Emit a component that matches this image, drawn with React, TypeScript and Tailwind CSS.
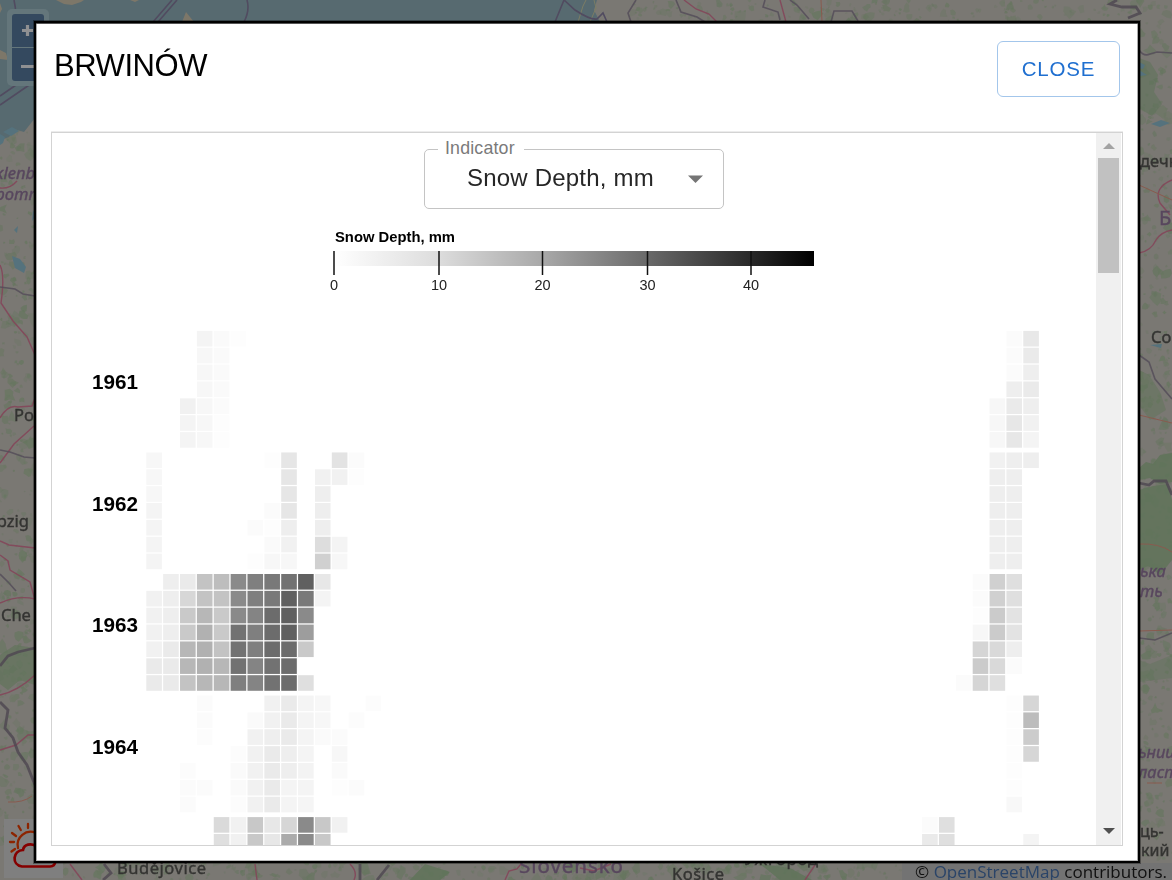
import React from "react";

type Cell = [number, string];

const parse = (row: string): Cell[] =>
  row
    .split(" ")
    .filter(Boolean)
    .map((item) => {
      const [col, level] = item.split(":");
      return [Number(col), `#${level}${level}${level}`];
    });

// One entry per year, one string per weekday; every item is "week:grey level".
const YEARS: { year: string; rows: string[] }[] = [
  {
    year: "1961",
    rows: [
      "3:f4 4:fa 5:fd 51:fb 52:e8",
      "3:f7 4:fa 51:fb 52:ea",
      "3:f7 4:fa 51:fb 52:ee",
      "3:f7 4:fa 51:ee 52:ea",
      "2:f1 3:f7 4:fb 50:f7 51:ea 52:ee",
      "2:f4 3:f7 4:fd 50:f7 51:e7 52:f1",
      "2:f4 3:f7 4:fd 50:f7 51:e7 52:f4",
    ],
  },
  {
    year: "1962",
    rows: [
      "0:f7 7:fd 8:e6 11:e3 12:fb 50:f1 51:ee 52:ee",
      "0:f7 8:e6 10:f1 11:f1 12:fd 50:ee 51:ee",
      "0:f7 8:e6 10:ee 50:ee 51:ee",
      "0:f4 7:fb 8:e6 10:ee 50:ee 51:ee",
      "0:f4 6:fb 7:fd 8:ee 10:ee 50:ee 51:ee",
      "0:f4 7:fa 8:f1 10:dd 11:f4 50:ee 51:ee",
      "0:f4 6:fd 7:f7 8:f7 10:d0 11:f7 50:ee 51:ee",
    ],
  },
  {
    year: "1963",
    rows: [
      "1:ee 2:ea 3:c3 4:bd 5:8a 6:7f 7:79 8:72 9:60 10:e7 49:fb 50:d0 51:df",
      "0:f1 1:ee 2:d7 3:c3 4:c3 5:8a 6:7f 7:79 8:60 9:79 10:f4 49:fb 50:d0 51:df",
      "0:f1 1:ee 2:c9 3:b7 4:c9 5:8a 6:84 7:6c 8:60 9:8a 49:fd 50:cb 51:e3",
      "0:f1 1:ee 2:c9 3:b1 4:c9 5:72 6:7f 7:6c 8:60 9:9d 49:f7 50:cb 51:e3",
      "0:f1 1:ea 2:b7 3:b1 4:c3 5:72 6:7f 7:6c 8:6c 9:c9 49:d5 50:d9 51:ee",
      "0:ea 1:ea 2:b7 3:b1 4:b7 5:72 6:84 7:72 8:6c 49:cb 50:d9 51:fb",
      "0:ea 1:ea 2:c3 3:b7 4:b7 5:7f 6:84 7:72 8:6c 9:df 48:fb 49:d5 50:df",
    ],
  },
  {
    year: "1964",
    rows: [
      "3:fb 7:f1 8:ea 9:f4 10:f7 13:fc 51:fd 52:d6",
      "3:fb 6:fa 7:f1 8:ea 9:f4 10:f7 12:fc 51:fd 52:bc",
      "3:fc 6:f1 7:ee 8:ea 9:f4 10:fa 11:fb 51:fd 52:cc",
      "5:fc 6:f1 7:ea 8:ee 9:f4 11:f7 51:fd 52:d6",
      "2:fc 5:fa 6:f1 7:ea 8:ee 9:f3 11:fa 51:fd",
      "2:fb 3:fb 5:fa 6:f1 7:ea 8:f4 9:f4 11:fd 12:fb 51:fd",
      "2:fb 5:fc 6:f1 7:ea 8:f4 9:f5 51:f8",
    ],
  },
  {
    year: "1965",
    rows: [
      "4:da 5:f1 6:c8 7:e7 8:d6 9:8a 10:c8 11:f1 46:fb 47:df",
      "4:df 5:f1 6:c8 7:e7 8:ab 9:8a 10:c8 46:ea 47:df 52:f4",
    ],
  },
];

const TICKS = [
  { x: 334, label: "0" },
  { x: 439, label: "10" },
  { x: 542.5, label: "20" },
  { x: 647.5, label: "30" },
  { x: 751, label: "40" },
];

const PITCH = 16.865;

function makeWoods() {
  let s = 7;
  const rnd = () => {
    s = (s * 16807) % 2147483647;
    return s / 2147483647;
  };
  const strips = [
    { x: 0, y: 128, w: 35, h: 740, n: 330 },
    { x: 1139, y: 0, w: 33, h: 864, n: 390 },
    { x: 630, y: 0, w: 510, h: 22, n: 170 },
    { x: 60, y: 862, w: 842, h: 18, n: 270 },
  ];
  const out: { d: string; o: number }[] = [];
  strips.forEach((st) => {
    for (let i = 0; i < st.n; i++) {
      const cx = st.x + rnd() * st.w;
      const cy = st.y + rnd() * st.h;
      const r = 1 + rnd() * rnd() * 6;
      const pts: string[] = [];
      for (let k = 0; k < 8; k++) {
        const a = (k / 8) * Math.PI * 2;
        const q = r * (0.5 + rnd() * 0.9);
        pts.push(`${(cx + Math.cos(a) * q).toFixed(1)} ${(cy + Math.sin(a) * q).toFixed(1)}`);
      }
      out.push({ d: `M${pts.join("L")}Z`, o: 0.25 + rnd() * 0.5 });
    }
  });
  return out;
}

const WOODS = makeWoods();

function MapBackground() {
  return (
    <svg className="absolute inset-0" width="1172" height="880" viewBox="0 0 1172 880">
      <rect width="1172" height="880" fill="#7a7873" />
      {WOODS.map((w, i) => (
        <path key={i} d={w.d} fill="#66765f" opacity={w.o} />
      ))}
      <g fill="#60745a" opacity="0.85">
        <path d="M1139 468 L1146 462 L1153 464 L1160 455 L1172 453 V482 L1160 484 L1150 478 L1139 480Z" />
        <path d="M1139 490 L1153 486 L1168 484 L1172 500 V560 L1160 575 L1148 566 L1139 570Z" />
        <path d="M1139 58 L1150 62 L1158 75 L1154 92 L1162 104 L1152 116 L1139 108Z" opacity=".7" />
        <path d="M0 655 L15 645 L35 648 V685 L20 680 L8 690 L0 684Z" opacity=".8" />
        <path d="M1139 660 L1150 664 L1172 655 V678 L1139 682Z" opacity=".5" />
        <path d="M1139 370 L1149 375 L1160 392 L1166 410 L1150 420 L1139 405Z" opacity=".6" />
        <path d="M760 864 L790 868 L812 880 H780Z M425 864 L450 872 L440 880 H410Z" />
      </g>
      <path d="M0 0 H597 L594 10 L600 22 H35 V118 L24 132 L14 129 L9 137 L0 140Z" fill="#576a70" />
      <path d="M578 22 L583 6 L586 0 M590 22 L596 8 L594 0" stroke="#7c7d64" fill="none" />
      <path d="M56 0 L64 4 L72 5 L81 2 L84 0Z M130 0 h9 l-4 2Z M182 22 L186 12 L190 17 L194 22Z M0 50 L6 53 L8 60 L0 59Z M0 3 l2 6 l-2 4Z" fill="#7d7769" />
      <path d="M0 105 L35 81 M0 96 L35 72 M172 0 L153 22 M177 0 L158 22 M247 0 Q250 10 244 22 M555 22 L564 0 L575 10 Q590 20 597 19 L603 13 L607 22 M14 0 Q18 18 13 26" fill="none" stroke="#514b60" strokeWidth="1.6" />
      <g fill="#55727d">
        <path d="M3 132 l9 -5 l7 4 l-8 5Z M0 134 l5 3 l-2 6 l-3 2Z M12 256 l8 3 l6 8 l-2 6 l-9 -5Z M33 210 l3 6 l-4 5Z M14 230 l4 -4 l-1 7Z M1139 62 l6 3 l-2 4 l-4 -1Z M1151 124 l10 -4 l9 3 l-10 4Z M1150 345 l12 -1 l-1 4Z M1139 70 l8 5 l-7 1Z" />
      </g>
      <g fill="none" stroke="#84465a" strokeWidth="1.4" opacity="0.9">
        <path d="M0 188 q10 1 17 -7 M0 265 q5 10 1 38 l12 18 14 16 l8 18 M0 418 q8 -14 18 -11 l14 -1 l3 -8 M0 463 l14 -19 l20 -18 M0 555 l8 6 l2 9 l20 12 l5 18 M0 541 l9 4 l26 3 M0 695 q18 -4 35 -20 M0 750 l16 -5 l12 -10 h7 M0 603 q18 -8 35 -4" />
        <path d="M1172 180 q-19 8 -12 23 l10 12 M1139 253 q12 -2 17 -13 q5 -8 16 -10 M684 0 l12 9 l13 5 l8 8 M780 0 l6 22 M255 864 l2 16 M350 864 q8 8 4 16 M70 864 l12 16 M505 880 l4 -9 l8 -2 l4 -5 M815 865 l-10 15 M580 868 l14 3 l17 -7" />
      </g>
      <g fill="none" stroke="#895b4f" strokeWidth="1">
        <path d="M1139 185 l33 15 M1139 415 l33 8 M1139 544 q20 -1 33 8 M1139 631 l33 -1 M1147 783 h15 M8 802 q15 1 24 -6 M821 0 l1 22" />
      </g>
      <g fill="none" stroke="#554d59" strokeWidth="1.6" opacity="0.85">
        <path d="M0 287 l15 2 l8 5 l12 2 M0 450 l10 2 l14 5 l11 1 M0 574 l9 9 l7 8 M1139 50 q5 7 11 4 l7 -2 l15 1 M1139 355 l10 7 l6 17 l17 20 M676 0 l5 12 l16 5 l8 5 M636 0 l-8 13 l3 9 M765 0 l-2 7 l15 5 l2 8 M790 0 l7 5 l12 14 M831 22 l3 -11 l18 0 l6 10 M1139 638 l16 2 l17 -7" />
      </g>
      <g fill="none" stroke="#504952" strokeWidth="2.8" opacity="0.85">
        <path d="M0 666 l8 -10 l10 -4 l17 -4 M0 702 l8 8 l-3 18 l8 10 l5 14 l9 13 l8 20 M1139 483 l10 2 l5 -4 l12 0 l6 14 M1117 0 l-7 4 l12 3 l14 0 l4 6 l-12 5 M104 864 l7 9 l-8 7 M360 864 v16 M377 880 l12 -15" />
      </g>
      <g strokeWidth="0.4" className="font-['Noto_Sans',sans-serif]">
        <g fill="#58475e" stroke="#58475e" className="text-[16.5px] italic">
          <text x="35" y="179" textAnchor="end">klenb</text>
          <text x="38" y="200" textAnchor="end">pomn</text>
          <text x="1140" y="577">ька</text>
          <text x="1140" y="597">ть</text>
          <text x="1138" y="758">ьниц</text>
          <text x="1138" y="778">ласт</text>
        </g>
        <g fill="#343432" stroke="#343432" className="text-[16.5px]">
          <text x="14" y="421">Po</text>
          <text x="29" y="527" textAnchor="end">pzig</text>
          <text x="1" y="621">Che</text>
          <text x="1140" y="167">дечн</text>
          <text x="1151" y="343">Со</text>
          <text x="1140" y="837" className="text-[16px]">ць-</text>
          <text x="1141" y="856" className="text-[16px]">кий</text>
          <text x="117" y="874" textLength="89">Budějovice</text>
          <text x="672" y="880" textLength="52">Košice</text>
          <text x="744" y="865" textLength="74">Ужгород</text>
        </g>
        <text x="1159" y="225" fill="#58475e" stroke="#58475e" className="text-[20px]">Б</text>
        <text x="519" y="873" textLength="104" fill="#58475e" stroke="#58475e" className="text-[20.5px]">Slovensko</text>
      </g>
    </svg>
  );
}

function ZoomControl() {
  return (
    <div className="absolute left-[7px] top-[9px] flex h-[77px] w-[42px] flex-col gap-px rounded-[5px] bg-[#64767b] p-[5px]">
      <div className="flex h-[33px] items-center rounded-t-[3px] bg-[#34495f] pl-[9px]">
        <svg width="13" height="13" viewBox="0 0 13 13"><path d="M6.5 1v11M1 6.5h11" stroke="#8f9092" strokeWidth="3.2" /></svg>
      </div>
      <div className="flex h-[33px] items-center rounded-b-[3px] bg-[#34495f] pl-[9px] pt-1">
        <svg width="13" height="13" viewBox="0 0 13 13"><path d="M0 6.5h13" stroke="#8f9092" strokeWidth="3" /></svg>
      </div>
    </div>
  );
}

function WeatherButton() {
  return (
    <div className="absolute left-1 top-[819px] h-[59px] w-[59px] bg-[#7f7f7f]">
      <svg width="59" height="59" viewBox="0 0 59 59" fill="none" strokeWidth="2.3" strokeLinecap="round">
        <path d="M14 29 A13 13 0 0 1 32 14 M24 5v4M14.5 7l2.3 4M8 14l4 3M6 23h4M7.5 32.500l3.500 -2.500" stroke="#8c2400" />
        <path d="M18 47.500 C7 46 9 31 19 31 C20 25 27 24 32 27 C40 23 48 30 46 37 C54 39 52 47 46 47.500Z" stroke="#850000" strokeWidth="2.700" />
      </svg>
    </div>
  );
}

function IndicatorSelect() {
  return (
    <div className="relative ml-[372px] mt-4 flex h-[60px] w-[300px] items-center rounded-[5px] border border-[#c4c4c4] pl-[42px] pr-5">
      <span className="absolute left-[13px] top-[-14px] h-[24px] w-[86px] bg-white pl-[7px] text-[17.8px] leading-[24px] tracking-[0.17px] text-[#7a7a7a]">
        Indicator
      </span>
      <span className="-mt-[3px] flex-1 whitespace-nowrap text-[24px] leading-[30px] tracking-[0.2px] text-[#262626]">
        Snow Depth, mm
      </span>
      <svg width="15" height="8" viewBox="0 0 15 8"><path d="M0 .5h15L7.500 8Z" fill="#757575" /></svg>
    </div>
  );
}

function SnowChart() {
  return (
    <svg className="block" width="1044" height="636" viewBox="52 209 1044 636">
      <defs>
        <linearGradient id="depth">
          <stop offset="0" stopColor="#ffffff" />
          <stop offset="0.22" stopColor="#dcdcdc" />
          <stop offset="0.44" stopColor="#a7a7a7" />
          <stop offset="0.65" stopColor="#6a6a6a" />
          <stop offset="0.87" stopColor="#282828" />
          <stop offset="1" stopColor="#000000" />
        </linearGradient>
      </defs>
      <text x="335" y="242" textLength="120" fill="#000" className="text-[14.8px] font-bold">Snow Depth, mm</text>
      <rect x="334" y="251" width="480" height="15" fill="url(#depth)" />
      {TICKS.map((t) => (
        <g key={t.label}>
          <path d={`M${t.x} 251V275`} stroke="#111" strokeWidth="1.500" />
          <text x={t.x} y="290" textAnchor="middle" fill="#222" className="text-[14.5px]">{t.label}</text>
        </g>
      ))}
      {YEARS.map(({ year, rows }, yi) => {
        const top = 330.9 + yi * 121.55;
        return (
          <g key={year}>
            {rows.length === 7 && (
              <text x="92" y={top + 58.2} fill="#000" className="text-[20.7px] font-bold">{year}</text>
            )}
            {rows.map((row, ri) =>
              parse(row).map(([col, fill]) => (
                <rect
                  key={`${ri}-${col}`}
                  x={146.300 + col * PITCH}
                  y={top + ri * PITCH}
                  width="15.600"
                  height="15.600"
                  fill={fill}
                />
              ))
            )}
          </g>
        );
      })}
    </svg>
  );
}

function Scrollbar() {
  return (
    <div className="flex h-full w-[25px] shrink-0 flex-col items-center bg-[#f0f0f0]">
      <div className="flex h-[25px] items-center">
        <svg width="12" height="6" viewBox="0 0 12 6"><path d="M6 0l6 6H0Z" fill="#a3a3a3" /></svg>
      </div>
      <div className="h-[115px] w-[21px] bg-[#c1c1c1]" />
      <div className="mb-[11px] mt-auto">
        <svg width="12" height="6" viewBox="0 0 12 6"><path d="M0 0h12L6 6Z" fill="#505050" /></svg>
      </div>
    </div>
  );
}

export default function App() {
  return (
    <div className="relative h-[880px] w-[1172px] overflow-hidden bg-[#787770] font-['Liberation_Sans',Arial,sans-serif]">
      <MapBackground />
      <ZoomControl />
      <WeatherButton />
      <div className="absolute bottom-0 right-0 flex h-[17px] w-[270px] items-center justify-end whitespace-nowrap bg-[#737373] pr-[5px] font-['Open_Sans',sans-serif] text-[17px] leading-[17px] text-[#101010]">
        <span>© <span className="text-[#2a4468]">OpenStreetMap</span> contributors.</span>
      </div>
      <div className="absolute left-[34px] top-[21px] flex h-[842px] w-[1106px] flex-col border-2 border-black bg-white shadow-[inset_0_1px_0_#555,inset_1px_0_0_#aaa,inset_-1px_0_0_#aaa,inset_0_-1px_0_#bbb,0_0_0_1px_rgba(0,0,0,0.35)]">
        <header className="flex h-[109px] shrink-0 items-start justify-between pl-[18px] pr-[18px] pt-[18px]">
          <h1 className="mt-[7px] text-[31px] leading-[35px] tracking-[-0.45px] text-black">BRWINÓW</h1>
          <button className="h-[56px] w-[123px] rounded-[6px] border border-[#a3c6eb] text-[20.5px] leading-[28px] tracking-[0.85px] text-[#1f6fd0]">
            CLOSE
          </button>
        </header>
        <div className="ml-[15px] flex h-[714px] w-[1072px] overflow-hidden border border-[#d3d3d3] shadow-[0_-1px_0_#ececec]">
          <main className="flex w-[1044px] shrink-0 flex-col">
            <IndicatorSelect />
            <SnowChart />
          </main>
          <Scrollbar />
        </div>
      </div>
    </div>
  );
}
